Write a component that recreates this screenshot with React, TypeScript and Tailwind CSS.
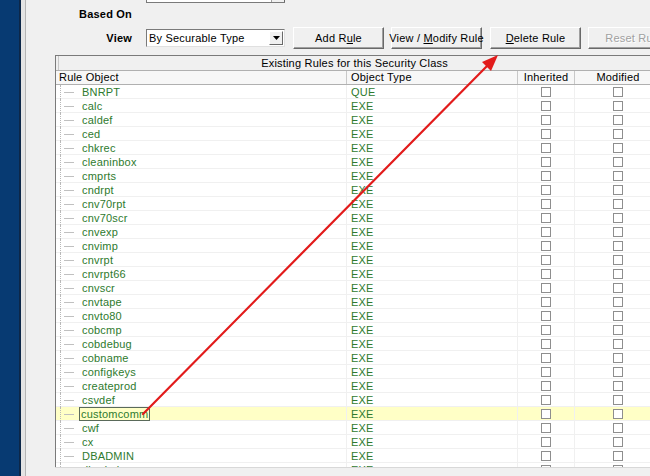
import React from "react";

const rows: [string, string][] = [
  ["BNRPT", "QUE"],
  ["calc", "EXE"],
  ["caldef", "EXE"],
  ["ced", "EXE"],
  ["chkrec", "EXE"],
  ["cleaninbox", "EXE"],
  ["cmprts", "EXE"],
  ["cndrpt", "EXE"],
  ["cnv70rpt", "EXE"],
  ["cnv70scr", "EXE"],
  ["cnvexp", "EXE"],
  ["cnvimp", "EXE"],
  ["cnvrpt", "EXE"],
  ["cnvrpt66", "EXE"],
  ["cnvscr", "EXE"],
  ["cnvtape", "EXE"],
  ["cnvto80", "EXE"],
  ["cobcmp", "EXE"],
  ["cobdebug", "EXE"],
  ["cobname", "EXE"],
  ["configkeys", "EXE"],
  ["createprod", "EXE"],
  ["csvdef", "EXE"],
  ["customcomm", "EXE"],
  ["cwf", "EXE"],
  ["cx", "EXE"],
  ["DBADMIN", "EXE"],
  ["dbadmin", "EXE"],
];

function Box() {
  return <div className="w-[10px] h-[10px] border border-[#8e8e8e] bg-white" />;
}

function Btn({ children, disabled }: { children: React.ReactNode; disabled?: boolean }) {
  return (
    <div
      className={
        "w-[91px] h-[22px] shrink-0 whitespace-nowrap flex items-center justify-center bg-[#f0f0f0] border-t border-l border-t-white border-l-white border-r border-b border-r-[#696969] border-b-[#696969] shadow-[inset_-1px_-1px_0_#a0a0a0] " +
        (disabled ? "text-[#a0a0a0]" : "text-black")
      }
    >
      {children}
    </div>
  );
}

export default function App() {
  return (
    <div
      className="relative w-[650px] h-[476px] overflow-hidden flex bg-[#f0f0f0] text-[11px] leading-[14px] text-black tracking-[0.2px]"
      style={{ fontFamily: '"Liberation Sans", Arial, sans-serif' }}
    >
      <div className="w-[19px] shrink-0 bg-[#073a72]" />
      <div className="w-[2px] shrink-0 bg-[#0d2748]" />
      <div className="w-[4px] shrink-0 bg-[#e4e4e4]" />
      <div className="w-[1px] shrink-0 bg-[#b4b4b4]" />
      <div className="flex-1 flex flex-col min-w-0">
        {/* cut-off combobox at top */}
        <div className="h-[4px] flex">
          <div className="ml-[120px] w-[139px] shrink-0 h-[3px] flex border-b border-l border-[#7a7a7a]">
            <div className="flex-1 bg-white" />
            <div className="w-[14px] bg-[#f0f0f0] border-l border-[#a0a0a0] border-r border-r-[#696969]" />
          </div>
        </div>
        <div className="h-[20px] flex items-center">
          <div className="w-[106px] shrink-0 text-right font-bold">Based On</div>
        </div>
        <div className="mt-[3px] h-[22px] flex items-center">
          <div className="w-[106px] shrink-0 text-right font-bold">View</div>
          <div className="ml-[14px] w-[139px] shrink-0 h-[18px] flex bg-white border border-t-[#7a7a7a] border-l-[#7a7a7a] border-r-[#e0e0e0] border-b-[#e0e0e0]">
            <div className="flex-1 pl-[2px] flex items-center whitespace-nowrap">By Securable Type</div>
            <div className="w-[14px] m-[1px] bg-[#f0f0f0] border border-t-white border-l-white border-r-[#696969] border-b-[#696969] flex items-center justify-center">
              <svg width="7" height="4" viewBox="0 0 7 4">
                <path d="M0 0h7L3.5 4z" fill="#000" />
              </svg>
            </div>
          </div>
          <div className="ml-[8px] flex shrink-0">
            <Btn>
              <span>
                Add R<span className="underline">u</span>le
              </span>
            </Btn>
            <div className="w-[7px] shrink-0" />
            <Btn>
              <span>
                View / <span className="underline">M</span>odify Rule
              </span>
            </Btn>
            <div className="w-[8px] shrink-0" />
            <Btn>
              <span>
                <span className="underline">D</span>elete Rule
              </span>
            </Btn>
            <div className="w-[7px] shrink-0" />
            <Btn disabled>
              <span className="[text-shadow:1px_1px_0_#ffffff]">Reset Rule</span>
            </Btn>
          </div>
        </div>
        {/* grid */}
        <div className="mt-[6px] ml-[29px] h-[412px] overflow-hidden border-t border-l border-[#7a7a7a] bg-white">
          <div className="w-[605px]">
            <div className="h-[15px] flex bg-[#f0f0f0] border-b border-[#b0b0b0]">
              <div className="w-[3px] border-r border-[#c8c8c8]" />
              <div className="w-[591px] text-center leading-[14px]">Existing Rules for this Security Class</div>
            </div>
            <div className="h-[14px] grid grid-cols-[291px_171px_57px_86px] bg-[#f7f7f7] border-b border-[#b0b0b0]">
              <div className="pl-[3px] border-r border-[#c8c8c8] leading-[13px]">Rule Object</div>
              <div className="pl-[4px] border-r border-[#c8c8c8] leading-[13px]">Object Type</div>
              <div className="text-center border-r border-[#c8c8c8] leading-[13px]">Inherited</div>
              <div className="text-center leading-[13px]">Modified</div>
            </div>
            {rows.map(([name, type], i) => {
              const sel = name === "customcomm";
              return (
                <div
                  key={i}
                  className={
                    "h-[14px] grid grid-cols-[291px_171px_57px_86px] border-b border-[#f0f0f0] " +
                    (sel ? "bg-[#ffffc6]" : "bg-white")
                  }
                >
                  <div className="flex items-stretch border-r border-[#f0f0f0]">
                    <div className="ml-[4px] w-px border-l border-dotted border-[#b8b8b8]" />
                    <div className="self-center w-[10px] ml-[3px] border-t border-[#c0c0c0]" />
                    {sel ? (
                      <div className="ml-[5px] h-[14px] px-[1px] border border-[#5a6a5a] text-[#2e7a2e] leading-[12px] bg-[#ffffc6]">
                        {name}
                      </div>
                    ) : (
                      <div className="ml-[8px] text-[#2e7a2e]">{name}</div>
                    )}
                  </div>
                  <div className="pl-[4px] text-[#2e7a2e] border-r border-[#f0f0f0]">{type}</div>
                  <div className="flex items-center justify-center border-r border-[#f0f0f0]">
                    <Box />
                  </div>
                  <div className="flex items-center justify-center">
                    <Box />
                  </div>
                </div>
              );
            })}
          </div>
        </div>
        <div className="flex-1 ml-[29px] bg-[#f0f0f0] border-t border-[#d8d8d8]" />
      </div>
      <svg
        className="absolute left-0 top-0 pointer-events-none"
        width="650"
        height="476"
        viewBox="0 0 650 476"
      >
        <line x1="143" y1="414" x2="490" y2="63" stroke="#e21b1b" strokeWidth="2.2" strokeLinecap="round" />
        <path d="M498 55 L482 62 L491 71 Z" fill="#e21b1b" />
      </svg>
    </div>
  );
}
